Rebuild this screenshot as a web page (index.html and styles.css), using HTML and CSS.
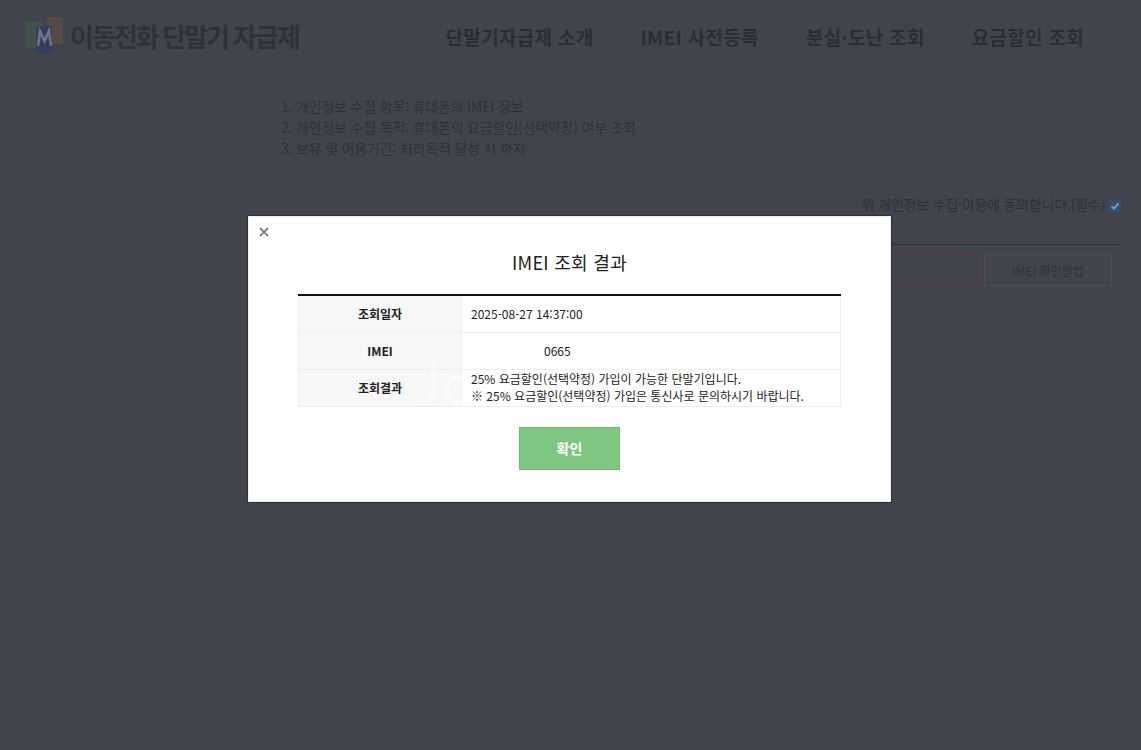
FILE: index.html
```html
<!DOCTYPE html>
<html lang="ko">
<head>
<meta charset="utf-8">
<title>IMEI 조회 결과</title>
<link rel="stylesheet" href="styles.css">
</head>
<body>
<div class="page">
  <header class="header">
    <a class="logo">
      <svg class="logo-mark" viewBox="0 0 40 40" width="40" height="40" aria-hidden="true">
        <rect x="0" y="6" width="17" height="27" rx="1" fill="#40514e"/>
        <rect x="22" y="2" width="16" height="27" rx="1" fill="#574948"/>
        <rect x="11" y="11" width="16" height="28" rx="1" fill="#303f5e"/>
        <path d="M13 31 L15 16 L19.5 26 L24 16 L26 31" fill="none" stroke="#6f7382" stroke-width="2.6"/>
      </svg>
      <span class="logo-text">이동전화 단말기 자급제</span>
    </a>
    <nav class="nav">
      <a>단말기자급제 소개</a>
      <a>IMEI 사전등록</a>
      <a>분실·도난 조회</a>
      <a>요금할인 조회</a>
    </nav>
  </header>
  <main class="layout">
    <aside class="side"></aside>
    <section class="content">
      <ol class="terms">
        <li>개인정보 수집 항목: 휴대폰의 IMEI 정보</li>
        <li>개인정보 수집 목적: 휴대폰의 요금할인(선택약정) 여부 조회</li>
        <li>보유 및 이용기간: 처리목적 달성 시 까지</li>
      </ol>
      <div class="agree">
        <span>위 개인정보 수집·이용에 동의합니다.(필수)</span>
        <svg class="check" viewBox="0 0 12 12" width="12" height="12" aria-hidden="true">
          <rect width="12" height="12" rx="1" fill="#2f4f75"/>
          <path d="M2.5 6.2 L5 8.7 L9.5 3.4" fill="none" stroke="#8d98a8" stroke-width="1.8"/>
        </svg>
      </div>
      <div class="form-row">
        <div class="imei-input"></div>
        <button class="imei-help">IMEI 확인방법</button>
      </div>
    </section>
  </main>
</div>
<div class="modal">
  <svg class="close" viewBox="0 0 10 10" width="10" height="10" aria-label="닫기">
    <path d="M1 1 L9 9 M9 1 L1 9" stroke="#7d8488" stroke-width="1.8" fill="none"/>
  </svg>
  <h2 class="modal-title">IMEI 조회 결과</h2>
  <table class="result">
    <tr><th>조회일자</th><td>2025-08-27 14:37:00</td></tr>
    <tr><th>IMEI</th><td class="imei">0665</td></tr>
    <tr><th>조회결과</th><td class="multi">25% 요금할인(선택약정) 가입이 가능한 단말기입니다.<br>※ 25% 요금할인(선택약정) 가입은 통신사로 문의하시기 바랍니다.</td></tr>
  </table>
  <span class="watermark" aria-hidden="true">Jo</span>
  <div class="actions"><button class="ok">확인</button></div>
</div>
</body>
</html>
```
FILE: styles.css
```css
* { box-sizing: border-box; }
html, body { margin: 0; height: 100%; }
body {
  background: #41444d;
  color: #2f3139;
  font-family: "Noto Sans CJK KR", "Noto Sans", sans-serif;
  overflow: hidden;
}
.page { height: 750px; display: flex; flex-direction: column; }
.header {
  height: 84px;
  flex: none;
  display: flex;
  align-items: flex-start;
  justify-content: space-between;
  border-bottom: 1px solid #3e414a;
  padding: 15px 57px 0 25px;
}
.logo { display: flex; align-items: flex-start; }
.logo-mark { flex: none; }
.logo-text {
  margin-left: 5px;
  font-size: 26px;
  line-height: 42px;
  font-weight: 700;
  letter-spacing: -2.1px;
  color: #2f3139;
  white-space: nowrap;
}
.nav { display: flex; gap: 47px; padding-top: 5px; }
.nav a {
  font-size: 19px;
  line-height: 34px;
  font-weight: 700;
  letter-spacing: .3px;
  color: #2b2d35;
  white-space: nowrap;
}
.layout { flex: 1; display: flex; padding-left: 18px; }
.side {
  width: 221px;
  flex: none;
  border-left: 1px solid #3d4049;
  border-right: 1px solid #3d4049;
}
.content { flex: 1; padding: 0 20px 0 24px; min-width: 0; }
.terms {
  margin: 0;
  padding: 12px 0 18px 33px;
  font-size: 14px;
  line-height: 21px;
  letter-spacing: -.18px;
  border-bottom: 1px solid #3d4049;
}
.agree {
  display: flex;
  justify-content: flex-end;
  align-items: center;
  gap: 4px;
  height: 67px;
  padding-bottom: 14px;
  font-size: 14px;
  letter-spacing: -.2px;
  border-bottom: 1px solid #34363f;
}
.check { flex: none; margin-top: 3px; }
.form-row {
  display: flex;
  justify-content: flex-end;
  gap: 4px;
  margin-top: 9px;
  padding-right: 9px;
}
.imei-input { width: 300px; height: 32px; border: 1px solid #5d3f45; }
.imei-help {
  width: 128px;
  height: 32px;
  background: transparent;
  border: 1px solid #484e60;
  font: inherit;
  font-size: 12px;
  color: #2f3139;
  padding: 0;
}
.modal {
  position: absolute;
  left: 248px;
  top: 216px;
  width: 643px;
  height: 286px;
  background: #fff;
  box-shadow: 0 0 0 1px #2e3039, inset 0 0 0 1px #eee;
  padding: 0 50px;
}
.close { position: absolute; left: 11px; top: 11px; }
.modal-title {
  margin: 0;
  padding-top: 33px;
  height: 78px;
  text-align: center;
  font-size: 18px;
  line-height: 27px;
  letter-spacing: .3px;
  font-weight: 400;
  color: #222;
}
.result {
  width: 543px;
  border-collapse: collapse;
  table-layout: fixed;
  border-top: 2px solid #111;
  font-size: 12px;
  color: #222;
}
.result th, .result td {
  height: 37px;
  padding: 0;
  border: 1px solid #eee;
}
.result th {
  width: 163px;
  background: #f7f7f7;
  font-weight: 700;
}
.result td { padding-left: 9px; background: #fff; }
.result td.imei { padding-left: 82px; }
.result td.multi {
  padding: 0 0 1px 9px;
  line-height: 17px;
  white-space: nowrap;
}
.watermark {
  position: absolute;
  left: 165px;
  top: 136px;
  font-size: 52px;
  line-height: 60px;
  white-space: nowrap;
  color: rgba(255, 255, 255, .55);
  pointer-events: none;
}
.actions { display: flex; justify-content: center; margin-top: 20px; }
.ok {
  width: 101px;
  height: 43px;
  background: #80c683;
  border: 1px solid #74ba77;
  color: #fff;
  font: inherit;
  font-size: 14px;
  font-weight: 700;
  padding: 0;
}
```
